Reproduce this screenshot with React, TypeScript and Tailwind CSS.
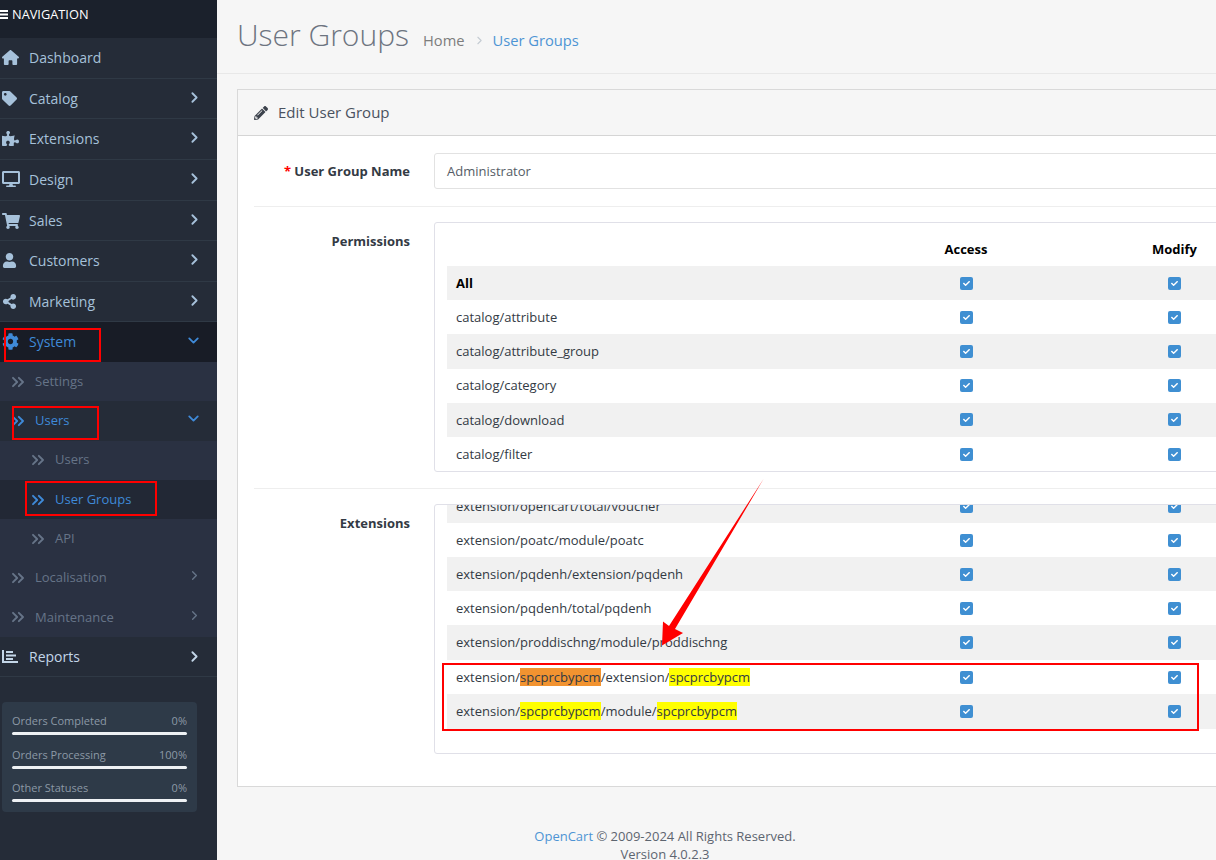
import React from "react";
import { FaTag, FaPuzzlePiece, FaDesktop, FaShoppingCart, FaUser, FaShareAlt, FaCog, FaPencilAlt, FaCheck } from "react-icons/fa";
import { FaHouse } from "react-icons/fa6";
import { ChevronRight, ChevronDown, ChevronsRight } from "lucide-react";

const top = [
  { t: "Dashboard", I: FaHouse, h: "h-[41px] pb-[2px]", c: false, s: 17 },
  { t: "Catalog", I: FaTag, h: "h-[40px]", c: true, s: 15 },
  { t: "Extensions", I: FaPuzzlePiece, h: "h-[41px] pb-[2px]", c: true, s: 17 },
  { t: "Design", I: FaDesktop, h: "h-[41px] pb-[2px]", c: true, s: 18 },
  { t: "Sales", I: FaShoppingCart, h: "h-[40px]", c: true, s: 18 },
  { t: "Customers", I: FaUser, h: "h-[41px] pb-[2px]", c: true, s: 15 },
  { t: "Marketing", I: FaShareAlt, h: "h-[40px]", c: true, s: 15 },
];

function TopItem({ t, I, h, c, s }: { t: string; I: any; h: string; c: boolean; s: number }) {
  return (
    <div className={`${h} flex items-center border-b border-[#2f3945] text-[#a6c1da] text-[14px] relative`}>
      <span className="w-[29px] pl-[2px] shrink-0 flex"><I size={s} /></span>
      <span>{t}</span>
      {c && <ChevronRight size={17} strokeWidth={2.6} className="absolute left-[186px] top-[10px]" />}
    </div>
  );
}

function ReportsIcon() {
  return (
    <svg width="18" height="15" viewBox="0 0 18 15" fill="currentColor">
      <rect x="2" y="1" width="2" height="13" />
      <rect x="2" y="12" width="16" height="2" />
      <rect x="6" y="2" width="7" height="2" />
      <rect x="6" y="5.5" width="10" height="2" />
      <rect x="6" y="9" width="7" height="2" />
    </svg>
  );
}

function SubItem({ t, cls, indent, active, chev }: { t: string; cls: string; indent: string; active?: boolean; chev?: "r" | "d" }) {
  return (
    <div className={`h-[39.3px] flex items-center relative text-[13px] ${cls} ${active ? "text-[#3f8ad8]" : "text-[#667488]"}`}>
      <span className={`${indent} shrink-0 flex`}><ChevronsRight size={20} strokeWidth={2.3} /></span>
      <span className="ml-[7px]">{t}</span>
      {chev === "r" && <ChevronRight size={15} strokeWidth={2.2} className="absolute left-[187px] top-[10px]" />}
      {chev === "d" && <ChevronDown size={17} strokeWidth={2.6} className="absolute left-[185px] top-[9px]" />}
    </div>
  );
}

function Stat({ l, v }: { l: string; v: string }) {
  return (
    <div className="h-[33.5px]">
      <div className="flex justify-between text-[11px] leading-[15px] text-[#8c99a6] pt-[10px] h-[29px]">
        <span>{l}</span>
        <span>{v}</span>
      </div>
      <div className="h-[3px] rounded-sm bg-[#eef1f4]" />
    </div>
  );
}

function Check() {
  return (
    <span className="w-[13px] h-[13px] rounded-[2px] bg-[#3f8fd2] flex items-center justify-center text-white">
      <FaCheck size={7} />
    </span>
  );
}

function Row({ children, gray, h = "h-[34.2px]", bold, pt = "pt-[1px]" }: { children: React.ReactNode; gray?: boolean; h?: string; bold?: boolean; pt?: string }) {
  return (
    <div className={`${h} flex w-[900px] items-center ${gray ? "bg-[#f1f1f1]" : "bg-white"}`}>
      <div className={`w-[415px] pl-[9px] ${pt} text-[13px] ${bold ? "font-bold text-black" : "text-[#333a44]"}`}>{children}</div>
      <div className="w-[208px] flex justify-center"><Check /></div>
      <div className="w-[208px] flex justify-center"><Check /></div>
    </div>
  );
}

const Y = ({ children }: { children: string }) => <span className="bg-[#ffff00]">{children}</span>;
const O = ({ children }: { children: string }) => <span className="bg-[#f29330]">{children}</span>;

export default function App() {
  return (
    <div className="relative w-[1216px] h-[860px] overflow-hidden flex bg-[#f6f6f6]" style={{ fontFamily: '"Open Sans", sans-serif' }}>
      <aside className="w-[217px] shrink-0 bg-[#252c38] h-full">
        <div className="h-[38px] bg-[#1b212c] text-white text-[12.8px] flex items-center pb-[9px]">
          <svg width="9" height="9" viewBox="0 0 9 9" fill="currentColor" className="mr-[3px]">
            <rect x="0" y="0" width="8" height="2" />
            <rect x="0" y="3.5" width="8" height="2" />
            <rect x="0" y="7" width="8" height="2" />
          </svg>
          <span>NAVIGATION</span>
        </div>
        {top.map((x) => <TopItem key={x.t} {...x} />)}
        <div className="h-[40px] pb-[2px] flex items-center bg-[#181c26] text-[#3f8ad8] text-[14px] relative">
          <span className="w-[29px] pl-[2px] shrink-0 flex"><FaCog size={17} /></span>
          <span>System</span>
          <ChevronDown size={17} strokeWidth={2.6} className="absolute left-[185px] top-[10px]" />
        </div>
        <div className="bg-[#2a3142]">
          <SubItem t="Settings" cls="" indent="pl-[8px]" />
          <SubItem t="Users" cls="bg-[#252c38]" indent="pl-[8px]" active chev="d" />
          <SubItem t="Users" cls="" indent="pl-[28px]" />
          <SubItem t="User Groups" cls="bg-[#222835]" indent="pl-[28px]" active />
          <SubItem t="API" cls="" indent="pl-[28px]" />
          <SubItem t="Localisation" cls="" indent="pl-[8px]" chev="r" />
          <SubItem t="Maintenance" cls="" indent="pl-[8px]" chev="r" />
        </div>
        <div className="h-[40px] flex items-center border-b border-[#2f3945] text-[#c3d6e8] text-[14px] relative">
          <span className="w-[29px] shrink-0 flex"><ReportsIcon /></span>
          <span>Reports</span>
          <ChevronRight size={17} strokeWidth={2.6} className="absolute left-[186px] top-[11px]" />
        </div>
        <div className="mt-[25px] ml-[2px] w-[195px] h-[110px] bg-[#2e3a48] rounded-sm px-[10px] pt-[1px]">
          <Stat l="Orders Completed" v="0%" />
          <Stat l="Orders Processing" v="100%" />
          <Stat l="Other Statuses" v="0%" />
        </div>
      </aside>

      <main className="w-[999px] shrink-0">
        <div className="h-[74px] border-b border-[#e8e8e8] flex items-center pl-[20px] pb-[4px]">
          <h1 className="text-[30px] font-light text-[#6d7480]">User Groups</h1>
          <span className="ml-[14px] mt-[11px] text-[14.7px] text-[#7d7d7d]">Home</span>
          <ChevronRight size={13} className="ml-[8px] mt-[12px] text-[#c5ccd3]" />
          <span className="ml-[7px] mt-[11px] text-[14.7px] text-[#4d94d4]">User Groups</span>
        </div>

        <div className="ml-[20px] mt-[15px] w-[1100px] h-[698px] border border-[#d9d9d9] bg-white">
          <div className="h-[46px] bg-[#f6f6f6] border-b border-[#d5d5d5] flex items-center pl-[16px] text-[#4a5260] text-[15px]">
            <FaPencilAlt size={14} className="mr-[10px] text-[#3c424c]" />
            Edit User Group
          </div>
          <div className="px-[16px] pt-[17px]">
            <div className="flex h-[36px] items-center">
              <label className="w-[156px] shrink-0 pt-[2px] text-right text-[13px] font-bold text-[#333a44]"><span className="text-[#f00]">* </span>User Group Name</label>
              <div className="ml-[24px] flex-1 h-full border border-[#e2e2e2] rounded-[3px] flex items-center pl-[12px] pt-[2px] text-[13px] text-[#555c66]">Administrator</div>
            </div>
            <div className="border-t border-[#eeeeee] mt-[17px]" />
            <div className="flex mt-[15px]">
              <label className="w-[156px] shrink-0 text-right text-[13px] font-bold text-[#333a44] pt-[10px]">Permissions</label>
              <div className="ml-[24px] w-[900px] shrink-0 h-[250px] border border-[#e0e0e8] rounded-[3px] overflow-hidden pl-[12px]">
                <div className="h-[43px] flex w-[900px] items-center pt-[11px] text-[13px] font-bold text-black">
                  <div className="w-[415px]" />
                  <div className="w-[208px] text-center">Access</div>
                  <div className="w-[208px] pl-[1px] text-center">Modify</div>
                </div>
                <Row gray bold>All</Row>
                <Row>catalog/attribute</Row>
                <Row gray>catalog/attribute_group</Row>
                <Row>catalog/category</Row>
                <Row gray>catalog/download</Row>
                <Row>catalog/filter</Row>
              </div>
            </div>
            <div className="border-t border-[#eeeeee] mt-[16px]" />
            <div className="flex mt-[15px]">
              <label className="w-[156px] shrink-0 text-right text-[13px] font-bold text-[#333a44] pt-[10px]">Extensions</label>
              <div className="ml-[24px] w-[900px] shrink-0 h-[250px] border border-[#e0e0e8] rounded-[3px] overflow-hidden pl-[12px]">
                <div className="-mt-[16px]">
                  <Row gray h="h-[34px]" pt="pt-[2px]">extension/opencart/total/voucher</Row>
                  <Row h="h-[34px]" pt="pt-[2px]">extension/poatc/module/poatc</Row>
                  <Row gray h="h-[34px]" pt="pt-[2px]">extension/pqdenh/extension/pqdenh</Row>
                  <Row h="h-[34px]" pt="pt-[2px]">extension/pqdenh/total/pqdenh</Row>
                  <Row gray h="h-[35px]" pt="pt-[1px]">extension/proddischng/module/proddischng</Row>
                  <Row h="h-[34px]" pt="pt-[2px]">extension/<O>spcprcbypcm</O>/extension/<Y>spcprcbypcm</Y></Row>
                  <Row gray h="h-[35px]" pt="pt-[0px]">extension/<Y>spcprcbypcm</Y>/module/<Y>spcprcbypcm</Y></Row>
                </div>
              </div>
            </div>
          </div>
        </div>

        <footer className="w-[896px] mt-[40px] text-center text-[13px] leading-[18px] text-[#5d6570]">
          <div><span className="text-[#4d94d4]">OpenCart</span> © 2009-2024 All Rights Reserved.</div>
          <div>Version 4.0.2.3</div>
        </footer>
      </main>

      <div className="absolute left-[4px] top-[328px] w-[97px] h-[34px] border-2 border-[#f00]" />
      <div className="absolute left-[12px] top-[406px] w-[87px] h-[34px] border-2 border-[#f00]" />
      <div className="absolute left-[25px] top-[481px] w-[132px] h-[35px] border-2 border-[#f00]" />
      <div className="absolute left-[442px] top-[663px] w-[757px] h-[68px] border-2 border-[#f00]" />
      <svg className="absolute left-[650px] top-[470px]" width="125" height="190" viewBox="650 470 125 190">
        <polygon points="763.5,479 675,629 683,633 662,645.5 663,621.5 669,626" fill="#f00" />
      </svg>
    </div>
  );
}
